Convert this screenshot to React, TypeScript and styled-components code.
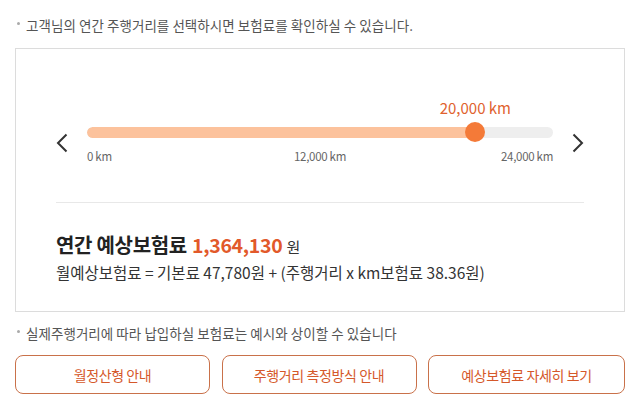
import React from "react";
import styled, { createGlobalStyle } from "styled-components";

const GlobalStyle = createGlobalStyle`
  html, body { margin: 0; padding: 0; background: #fff; }
  body {
    font-family: "Noto Sans CJK KR", "Noto Sans", sans-serif;
    color: #333;
  }
  * { box-sizing: border-box; }
`;

const Page = styled.div`
  width: 642px;
  padding: 16px 17px 0 15px;
  display: flex;
  flex-direction: column;
`;

const Note = styled.p<{ $mt?: number }>`
  position: relative;
  margin: ${(p) => p.$mt ?? 0}px 0 0;
  padding-left: 11px;
  font-size: 13.5px;
  line-height: 18px;
  letter-spacing: 0.05px;
  color: #555;
  &::before {
    content: "";
    position: absolute;
    left: 2px;
    top: 6px;
    width: 3px;
    height: 3px;
    border-radius: 50%;
    background: #aaa;
  }
`;

const Card = styled.section`
  margin-top: 14px;
  height: 264px;
  border: 1px solid #dcdcdc;
  padding: 49px 40px 0 40px;
  display: flex;
  flex-direction: column;
`;

const SliderRow = styled.div`
  display: grid;
  grid-template-columns: 31px 1fr 31px;
  align-items: center;
`;

const ArrowButton = styled.button<{ $side: "left" | "right" }>`
  border: 0;
  background: none;
  padding: 0;
  margin-top: 24px;
  height: 20px;
  display: flex;
  align-items: center;
  justify-content: ${(p) => (p.$side === "left" ? "flex-start" : "flex-end")};
  cursor: pointer;
`;

const SliderBody = styled.div`
  display: flex;
  flex-direction: column;
`;

const ValueLine = styled.div`
  position: relative;
  height: 20px;
`;

const ValueLabel = styled.span`
  position: absolute;
  top: 0;
  transform: translateX(-50%);
  white-space: nowrap;
  font-size: 15px;
  line-height: 20px;
  color: #e0622e;
`;

const Track = styled.div`
  position: relative;
  margin-top: 4px;
  height: 20px;
  display: flex;
  align-items: center;
`;

const Rail = styled.div`
  position: relative;
  width: 100%;
  height: 11px;
  border-radius: 6px;
  background: #eeeeee;
  overflow: hidden;
`;

const Fill = styled.div`
  height: 100%;
  border-radius: 6px;
  background: #fcc29c;
`;

const Thumb = styled.div`
  position: absolute;
  top: 0;
  width: 20px;
  height: 20px;
  margin-left: -10px;
  border-radius: 50%;
  background: #f47a38;
`;

const Ticks = styled.div`
  margin-top: 6px;
  display: grid;
  grid-template-columns: 1fr auto 1fr;
  font-size: 11.5px;
  line-height: 16px;
  letter-spacing: -0.3px;
  color: #666;
`;

const Tick = styled.span<{ $align: "start" | "center" | "end" }>`
  justify-self: ${(p) => p.$align};
  white-space: nowrap;
`;

const Divider = styled.hr`
  margin: 38px 0 0;
  border: 0;
  border-top: 1px solid #e8e8e8;
`;

const Result = styled.div`
  margin-top: 29px;
  display: flex;
  flex-direction: column;
`;

const TotalLine = styled.div`
  display: flex;
  align-items: baseline;
  line-height: 26px;
`;

const TotalLabel = styled.strong`
  font-size: 20px;
  font-weight: 700;
  color: #222;
  letter-spacing: -0.3px;
`;

const TotalValue = styled.strong`
  margin-left: 5px;
  font-size: 19.5px;
  font-weight: 700;
  color: #e2592a;
  letter-spacing: -0.3px;
`;

const Unit = styled.span`
  margin-left: 4px;
  font-size: 15px;
  color: #333;
`;

const Formula = styled.p`
  margin: 1px 0 0;
  font-size: 15.5px;
  line-height: 22px;
  letter-spacing: 0;
  color: #333;
`;

const ButtonRow = styled.div`
  margin-top: 13px;
  display: grid;
  grid-template-columns: 195px 195px 197px;
  column-gap: 11.5px;
`;

const LinkButton = styled.button`
  height: 39px;
  border: 1px solid #c9714a;
  border-radius: 8px;
  background: #fff;
  font-family: "Noto Sans CJK KR", "Noto Sans", sans-serif;
  font-size: 14px;
  letter-spacing: -0.4px;
  color: #d5582a;
  cursor: pointer;
`;

const Chevron = ({ dir }: { dir: "left" | "right" }) => (
  <svg width="12" height="20" viewBox="0 0 12 20" fill="none">
    <path
      d={dir === "left" ? "M10.5 1.5 L2 10 L10.5 18.5" : "M1.5 1.5 L10 10 L1.5 18.5"}
      stroke="#333"
      strokeWidth="2"
    />
  </svg>
);

export default function App() {
  const max = 24000;
  const value = 20000;
  const pct = (value / max) * 100;
  return (
    <>
      <GlobalStyle />
      <Page>
        <Note>고객님의 연간 주행거리를 선택하시면 보험료를 확인하실 수 있습니다.</Note>
        <Card>
          <SliderRow>
            <ArrowButton $side="left" aria-label="이전">
              <Chevron dir="left" />
            </ArrowButton>
            <SliderBody>
              <ValueLine>
                <ValueLabel style={{ left: `${pct}%` }}>20,000 km</ValueLabel>
              </ValueLine>
              <Track>
                <Rail>
                  <Fill style={{ width: `${pct}%` }} />
                </Rail>
                <Thumb style={{ left: `${pct}%` }} />
              </Track>
              <Ticks>
                <Tick $align="start">0 km</Tick>
                <Tick $align="center">12,000 km</Tick>
                <Tick $align="end">24,000 km</Tick>
              </Ticks>
            </SliderBody>
            <ArrowButton $side="right" aria-label="다음">
              <Chevron dir="right" />
            </ArrowButton>
          </SliderRow>
          <Divider />
          <Result>
            <TotalLine>
              <TotalLabel>연간 예상보험료</TotalLabel>
              <TotalValue>1,364,130</TotalValue>
              <Unit>원</Unit>
            </TotalLine>
            <Formula>월예상보험료 = 기본료 47,780원 + (주행거리 x km보험료 38.36원)</Formula>
          </Result>
        </Card>
        <Note $mt={12}>실제주행거리에 따라 납입하실 보험료는 예시와 상이할 수 있습니다</Note>
        <ButtonRow>
          <LinkButton>월정산형 안내</LinkButton>
          <LinkButton>주행거리 측정방식 안내</LinkButton>
          <LinkButton>예상보험료 자세히 보기</LinkButton>
        </ButtonRow>
      </Page>
    </>
  );
}
